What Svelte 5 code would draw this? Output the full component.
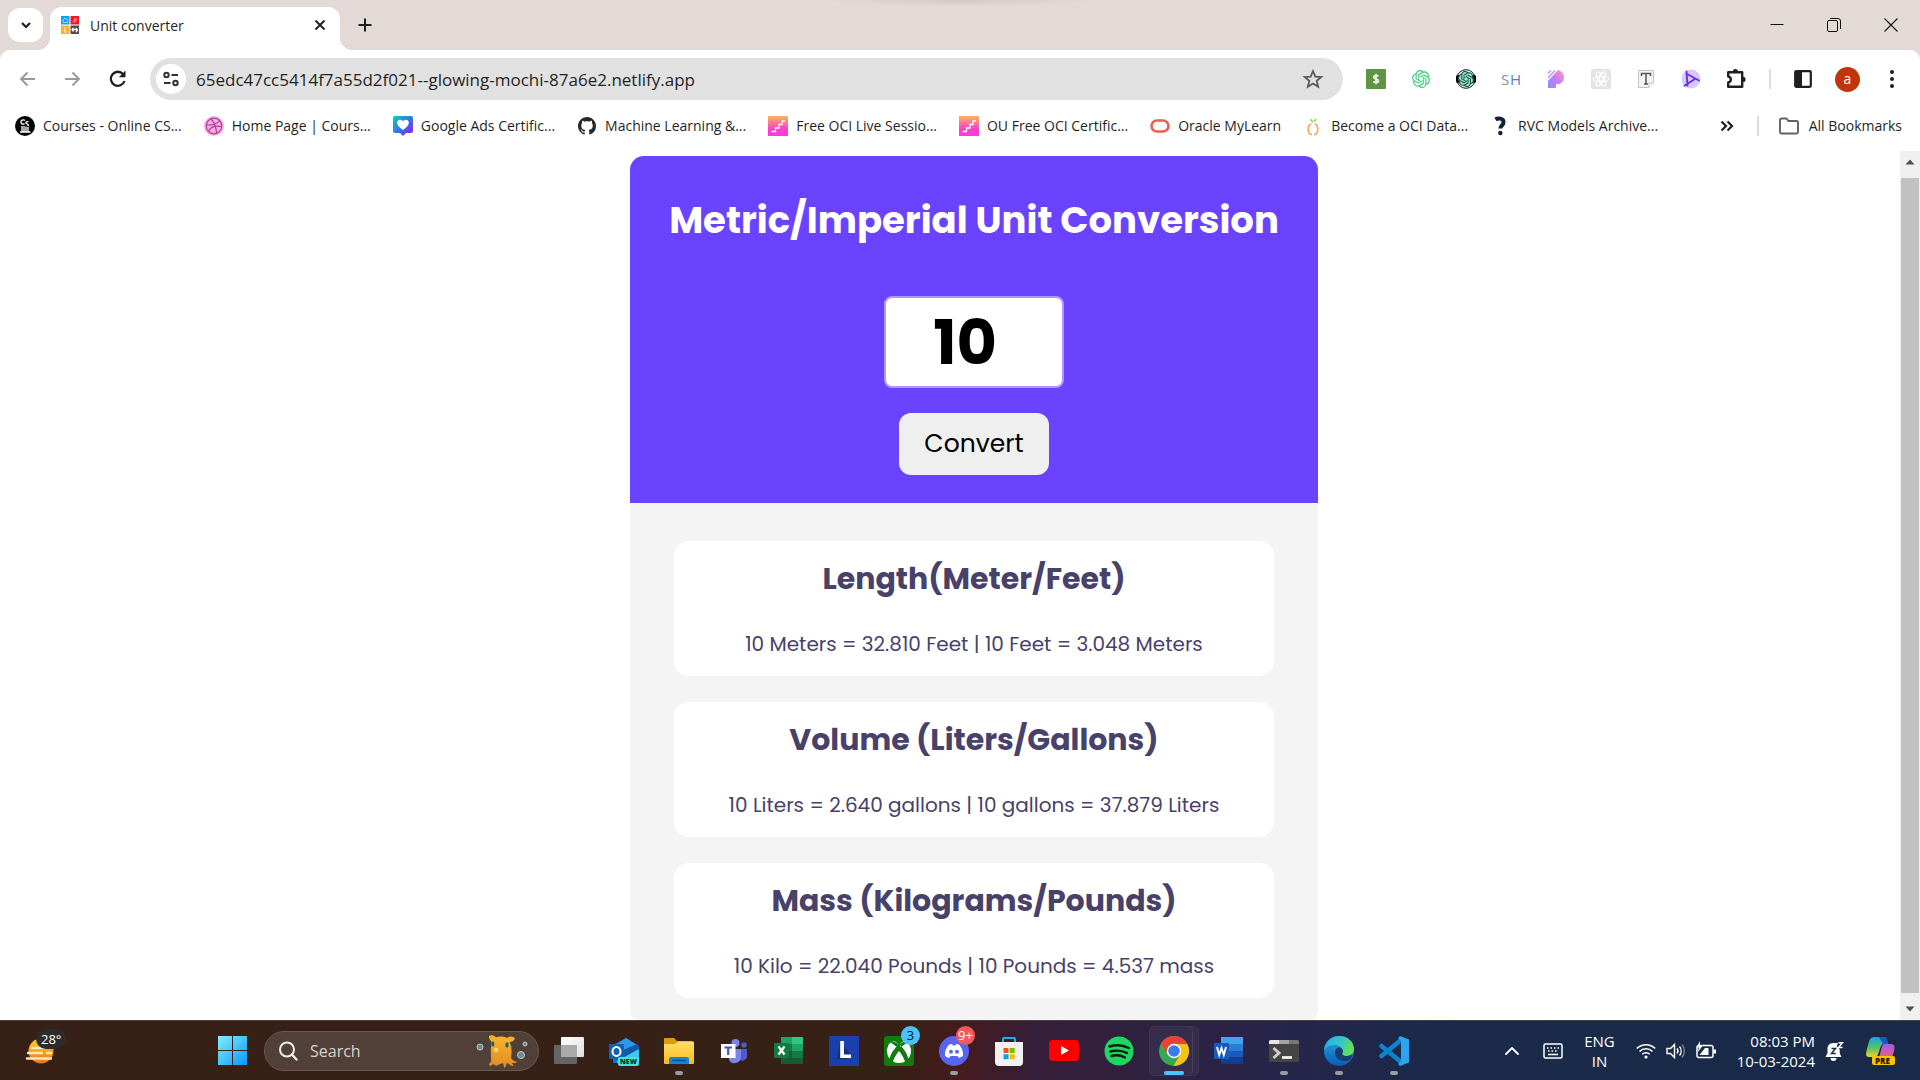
<script>
  let amount = $state(10);
  const address = '65edc47cc5414f7a55d2f021--glowing-mochi-87a6e2.netlify.app';

  const fixed = (n) => n.toFixed(3);
  const results = $derived([
    {
      title: 'Length(Meter/Feet)',
      text: `${amount} Meters = ${fixed(amount * 3.281)} Feet | ${amount} Feet = ${fixed(amount / 3.281)} Meters`
    },
    {
      title: 'Volume (Liters/Gallons)',
      text: `${amount} Liters = ${fixed(amount * 0.264)} gallons | ${amount} gallons = ${fixed(amount / 0.264)} Liters`
    },
    {
      title: 'Mass (Kilograms/Pounds)',
      text: `${amount} Kilo = ${fixed(amount * 2.204)} Pounds | ${amount} Pounds = ${fixed(amount / 2.204)} mass`
    }
  ]);

  const bookmarks = [
    { icon: 'cs', label: 'Courses - Online CS...' },
    { icon: 'ball', label: 'Home Page | Cours...' },
    { icon: 'heart', label: 'Google Ads Certific...' },
    { icon: 'github', label: 'Machine Learning &...' },
    { icon: 'stairs', label: 'Free OCI Live Sessio...' },
    { icon: 'stairs', label: 'OU Free OCI Certific...' },
    { icon: 'oracle', label: 'Oracle MyLearn' },
    { icon: 'fruit', label: 'Become a OCI Data...' },
    { icon: 'question', label: 'RVC Models Archive...' }
  ];

  const extensions = ['dollar', 'knot', 'knotphones', 'sh', 'pfeather', 'atom', 'type', 'play', 'puzzle'];

  const apps = [
    { name: 'Task view' },
    { name: 'Outlook' },
    { name: 'File Explorer', open: true },
    { name: 'Teams' },
    { name: 'Excel' },
    { name: 'Ledger' },
    { name: 'Xbox', badge: '3' },
    { name: 'Discord', open: true, badge: '9+', alert: true },
    { name: 'Microsoft Store' },
    { name: 'YouTube' },
    { name: 'Spotify' },
    { name: 'Chrome', open: true, active: true },
    { name: 'Word' },
    { name: 'Terminal', open: true },
    { name: 'Edge', open: true },
    { name: 'VS Code', open: true }
  ];
</script>

{#snippet knot(color)}
  <path fill={color} d="M22.2819 9.8211a5.9847 5.9847 0 0 0-.5157-4.9108 6.0462 6.0462 0 0 0-6.5098-2.9A6.0651 6.0651 0 0 0 4.9807 4.1818a5.9847 5.9847 0 0 0-3.9977 2.9 6.0462 6.0462 0 0 0 .7427 7.0966 5.98 5.98 0 0 0 .511 4.9107 6.051 6.051 0 0 0 6.5146 2.9001A5.9847 5.9847 0 0 0 13.2599 24a6.0557 6.0557 0 0 0 5.7718-4.2058 5.9894 5.9894 0 0 0 3.9977-2.9001 6.0557 6.0557 0 0 0-.7475-7.0729zm-9.022 12.6081a4.4755 4.4755 0 0 1-2.8764-1.0408l.1419-.0804 4.7783-2.7582a.7948.7948 0 0 0 .3927-.6813v-6.7369l2.02 1.1686a.071.071 0 0 1 .038.052v5.5826a4.504 4.504 0 0 1-4.4945 4.4944zm-9.6607-4.1254a4.4708 4.4708 0 0 1-.5346-3.0137l.142.0852 4.783 2.7582a.7712.7712 0 0 0 .7806 0l5.8428-3.3685v2.3324a.0804.0804 0 0 1-.0332.0615L9.74 19.9502a4.4992 4.4992 0 0 1-6.1408-1.6464zM2.3408 7.8956a4.485 4.485 0 0 1 2.3655-1.9728V11.6a.7664.7664 0 0 0 .3879.6765l5.8144 3.3543-2.0201 1.1685a.0757.0757 0 0 1-.071 0l-4.8303-2.7865A4.504 4.504 0 0 1 2.3408 7.872zm16.5963 3.8558L13.1038 8.364 15.1192 7.2a.0757.0757 0 0 1 .071 0l4.8303 2.7913a4.4944 4.4944 0 0 1-.6765 8.1042v-5.6772a.79.79 0 0 0-.407-.667zm2.0107-3.0231l-.142-.0852-4.7735-2.7818a.7759.7759 0 0 0-.7854 0L9.409 9.2297V6.8974a.0662.0662 0 0 1 .0284-.0615l4.8303-2.7866a4.4992 4.4992 0 0 1 6.6802 4.66zM8.3065 12.863l-2.02-1.1638a.0804.0804 0 0 1-.038-.0567V6.0742a4.4992 4.4992 0 0 1 7.3757-3.4537l-.142.0805L8.704 5.459a.7948.7948 0 0 0-.3927.6813zm1.0976-2.3654l2.602-1.4998 2.6069 1.4998v2.9994l-2.5974 1.4997-2.6067-1.4997Z" />
{/snippet}

{#snippet favicon(name)}
  <svg class="ico20" viewBox="0 0 20 20" aria-hidden="true">
    {#if name === 'cs'}
      <circle cx="10" cy="10" r="10" fill="#000" />
      <path d="M10 4.500C8 3 5.500 4.500 6 6.500S8.500 8.500 9.500 7.500M13.500 6C11.500 5 10 6.500 11.500 7.500S14.500 9 12.500 10M7 10V15.500M9 10V15.500M11 10.500V15.500M13 11V15.500M5 16H15.500" fill="none" stroke="#fff" stroke-width="1.300" />
    {:else if name === 'ball'}
      <circle cx="10" cy="10" r="10" fill="#fbaee3" />
      <g fill="none" stroke="#b0419a" stroke-width="1.200">
        <circle cx="10" cy="10" r="7.800" />
        <path d="M7.200 3C10 6 12 11 12.600 17.200M2.300 9.200C8 9.500 13 8 15.700 4.700M4.500 15.200C7 10.500 12 9.200 17.700 10.800" />
      </g>
    {:else if name === 'heart'}
      <defs><linearGradient id="heart" x1="0" y1="0" x2="1" y2="1"><stop offset="0" stop-color="#04cfc0" /><stop offset=".5" stop-color="#3277e8" /><stop offset="1" stop-color="#a10ff5" /></linearGradient></defs>
      <path d="M2 0H18a2 2 0 0 1 2 2V15a2 2 0 0 1-2 2H13L10 20 7 17H2a2 2 0 0 1-2-2V2a2 2 0 0 1 2-2Z" fill="url(#heart)" />
      <path d="M10 14C2 9 3.500 3.800 7 3.800 9 3.800 10 5.500 10 5.500S11 3.800 13 3.800C16.500 3.800 18 9 10 14Z" fill="#fff" />
    {:else if name === 'github'}
      <path transform="translate(1 1) scale(1.125)" fill="#24292f" d="M8 0C3.580 0 0 3.580 0 8c0 3.540 2.290 6.530 5.470 7.590.4.070.550-.170.550-.380 0-.190-.010-.820-.010-1.490-2.010.370-2.530-.490-2.690-.940-.090-.230-.480-.940-.820-1.130-.280-.150-.680-.520-.010-.530.630-.010 1.080.580 1.230.820.720 1.210 1.870.870 2.330.660.070-.520.280-.870.510-1.070-1.780-.200-3.640-.890-3.640-3.950 0-.870.310-1.590.820-2.150-.080-.200-.360-1.020.080-2.120 0 0 .670-.210 2.200.820.640-.180 1.320-.270 2-.270s1.360.090 2 .270c1.530-1.040 2.200-.820 2.200-.820.440 1.100.160 1.920.080 2.120.510.560.820 1.270.820 2.150 0 3.070-1.870 3.750-3.650 3.950.290.250.540.730.540 1.480 0 1.070-.010 1.930-.010 2.200 0 .210.150.460.550.380A8.010 8.010 0 0 0 16 8c0-4.420-3.580-8-8-8Z" />
    {:else if name === 'stairs'}
      <defs><linearGradient id="stairs" x1="0" y1="0" x2="0" y2="1"><stop offset="0" stop-color="#ffb65c" /><stop offset=".65" stop-color="#ff3fc8" /><stop offset="1" stop-color="#f93ae6" /></linearGradient></defs>
      <path d="M0 0H20V20H0Z" fill="url(#stairs)" />
      <path d="M3.500 15.500H7.500V12H11V8.500H14V5H17" fill="none" stroke="#fff" stroke-width="1.300" />
    {:else if name === 'oracle'}
      <rect x="1.500" y="4.500" width="17" height="11" rx="5.500" fill="none" stroke="#ec5f4b" stroke-width="2.600" />
    {:else if name === 'fruit'}
      <path d="M8.500 8C4 8 4 18.500 9 18.500M11.500 8C16 8 16 18.500 11 18.500" fill="none" stroke="#f7a763" stroke-width="1.700" />
      <path d="M10 7C7.500 6 7 4 7.500 2.500 9.500 3 10 5 10 7ZM10.500 6C10.500 4 12 2.500 13.500 2.500 13.500 5 12.500 6 10.500 6Z" fill="#9bd35f" />
    {:else if name === 'question'}
      <path d="M5.500 3.500C8 1.800 13.500 2 13.500 6 13.500 9.500 10.300 9.500 10.300 12.500" fill="none" stroke="#0b2239" stroke-width="4" />
      <circle cx="10.300" cy="17" r="2.200" fill="#0b2239" />
    {/if}
  </svg>
{/snippet}

{#snippet extension(name)}
  <svg class="ico20" viewBox="0 0 20 20" aria-hidden="true">
    {#if name === 'dollar'}
      <rect width="20" height="20" rx="1" fill="#5f9445" />
      <path d="M12.600 7.300C11.500 6 7.600 6 7.600 8.200 7.600 10.500 12.500 9.500 12.500 12 12.500 14 8.500 14 7.300 12.500M10 4.800V15.200" fill="none" stroke="#fff" stroke-width="1.500" />
    {:else if name === 'knot'}
      <g transform="translate(1 1) scale(.75)">{@render knot('#35cf74')}</g>
    {:else if name === 'knotphones'}
      <circle cx="10" cy="10" r="9.300" fill="#e9f5f1" stroke="#151515" />
      <rect y="6" width="4" height="8" rx="2" /><rect x="16" y="6" width="4" height="8" rx="2" />
      <circle cx="10" cy="10" r="7.500" fill="#a5d6c7" />
      <g transform="translate(2 2) scale(.67)">{@render knot('#0b5f4b')}</g>
    {:else if name === 'sh'}
      <text x="0" y="16" font-size="15" fill="#84919c">S</text><text x="9" y="16" font-size="15" fill="#4a87c5">H</text>
    {:else if name === 'pfeather'}
      <defs><linearGradient id="pf" x1="1" y1="0" x2="0" y2="1"><stop offset="0" stop-color="#ff9cc4" /><stop offset=".5" stop-color="#c87cf2" /><stop offset="1" stop-color="#8a8dff" /></linearGradient></defs>
      <path d="M2 12 12 1C20 2 21 16 10 15V19H2Z" fill="url(#pf)" />
      <path d="M2 4.500 5 1.500M2 9 9 1.500" stroke="#c59af5" stroke-width="1.700" />
    {:else if name === 'atom'}
      <rect width="20" height="20" rx="2" fill="#e3e3e3" />
      <g fill="none" stroke="#fff"><ellipse cx="10" cy="10" rx="8" ry="3" /><ellipse cx="10" cy="10" rx="8" ry="3" transform="rotate(60 10 10)" /><ellipse cx="10" cy="10" rx="8" ry="3" transform="rotate(120 10 10)" /><circle cx="10" cy="10" r="2" /></g>
    {:else if name === 'type'}
      <path d="M2.500 1.500H17.500V14L13 18.500H2.500Z" fill="#f4f4f4" stroke="#c4c4c4" />
      <path d="M13 18.500V14H17.500" fill="#fff" stroke="#c4c4c4" />
      <path d="M5.500 7V4.500H14.500V7M10 4.500V15M8 15H12" fill="none" stroke="#555" stroke-width="1.500" />
    {:else if name === 'play'}
      <circle cx="10" cy="10" r="9.500" fill="#d6c8fb" />
      <path d="M5.500 2.500 6.500 16.500M6 5 18 11.500M3.500 16.800 13.500 10.200" fill="none" stroke="#6a30e0" stroke-width="1.900" stroke-linecap="round" />
    {:else if name === 'puzzle'}
      <path d="M2.200 3.200H16.200V17.800H2.200V13.500C5.700 12.800 5.700 8.200 2.200 7.500Z" fill="none" stroke="#202124" stroke-width="2.400" stroke-linejoin="round" />
      <path d="M6.800 2.500A2.600 2.600 0 0 1 12 2.500ZM17 7.800A2.600 2.600 0 0 1 17 13Z" fill="#202124" />
    {/if}
  </svg>
{/snippet}

{#snippet appIcon(name)}
  <svg class="ico30" viewBox="0 0 30 30" aria-hidden="true">
    {#if name === 'Task view'}
      <defs><linearGradient id="tv" x1="0" y1="0" x2="1" y2="1"><stop offset="0" stop-color="#fff" /><stop offset="1" stop-color="#dedede" /></linearGradient></defs>
      <rect x="7" y="1" width="23" height="20" rx="1" fill="url(#tv)" />
      <rect y="9" width="23" height="19" rx="1" fill="#656565" />
      <path d="M7 9H23V21H7Z" fill="#aaa" />
    {:else if name === 'Outlook'}
      <path d="M4 9 17 2 30 10V27H4Z" fill="#1170c4" />
      <path d="M8 8 17 2 28 9 16 16Z" fill="#2f97e8" /><path d="M12 15 28 8 30 11V22L18 26Z" fill="#1257a8" />
      <path d="M8 25 30 13V27H8Z" fill="#42c5f5" />
      <rect y="8" width="15" height="15" rx="1" fill="#0f62b8" />
      <ellipse cx="7.500" cy="15.500" rx="4" ry="4.500" fill="none" stroke="#fff" stroke-width="2" />
      <rect x="9" y="21" width="21" height="9" rx="2" fill="#3ce6dc" />
      <text x="11" y="28" font-size="7" font-weight="800" fill="#082a2a">NEW</text>
    {:else if name === 'File Explorer'}
      <defs><linearGradient id="fe" x1="0" y1="0" x2="0" y2="1"><stop offset="0" stop-color="#ffdf6e" /><stop offset="1" stop-color="#fcbb14" /></linearGradient></defs>
      <path d="M0 3a1 1 0 0 1 1-1H10L13 5H28V10H0Z" fill="#dc9b0a" />
      <path d="M0 8H11L14 5.500H29a1 1 0 0 1 1 1V27a1 1 0 0 1-1 1H1a1 1 0 0 1-1-1Z" fill="url(#fe)" />
      <path d="M5 28V23a2 2 0 0 1 2-2H23a2 2 0 0 1 2 2V28Z" fill="#1484d8" /><path d="M9 24.500H21" stroke="#0a4f96" stroke-width="1.500" stroke-linecap="round" />
    {:else if name === 'Teams'}
      <circle cx="25" cy="9" r="2.800" fill="#5059c9" /><circle cx="16.500" cy="7" r="4" fill="#7b83eb" />
      <path d="M19 13H28V21a4.500 4.500 0 0 1-8 2Z" fill="#5059c9" />
      <path d="M10 13H22V20a6.500 6.500 0 0 1-12 4Z" fill="#7b83eb" />
      <rect x="2" y="8" width="14.500" height="14" fill="#fff" /><path d="M5.500 11.500H13M9.200 11.500V19" stroke="#4b53bc" stroke-width="2.200" />
    {:else if name === 'Excel'}
      <path d="M7 1H29V28H7Z" fill="#21a366" /><path d="M18 1H29V8H18Z" fill="#33c481" /><path d="M7 8H18V15H7Z" fill="#107c41" /><path d="M7 15H29V28H7Z" fill="#185c37" /><path d="M18 15H29V22H18Z" fill="#107c41" />
      <rect y="7" width="15" height="15" rx="1" fill="#107c41" /><path d="M4.500 10.500 10.500 18.500M10.500 10.500 4.500 18.500" stroke="#fff" stroke-width="2.200" />
    {:else if name === 'Ledger'}
      <path d="M0 0H30V30H0Z" fill="#1c3fae" /><path d="M11 6 8 23H18L22 19Z" fill="#11307c" /><path d="M11.200 5H15V18.500H22V22H11.200Z" fill="#fff" />
    {:else if name === 'Xbox'}
      <rect width="30" height="30" rx="3" fill="#107c10" /><circle cx="15" cy="15" r="12" fill="#fff" />
      <path d="M6 4C9 4 12 6 15 8.500 18 6 21 4 24 4L15 0ZM15 8.500C10 12 6 19 5 25L8 28C10 22 13 17 15 15 17 17 20 22 22 28L25 25C24 19 20 12 15 8.500ZM15 8.500 9 5 6 6 13 11ZM15 8.500 21 5 24 6 17 11Z" fill="#107c10" />
    {:else if name === 'Discord'}
      <circle cx="15" cy="15" r="15" fill="#5865f2" />
      <path d="M10 8.500 13 8 13.800 9.500H16.200L17 8 20 8.500C23 12 24.500 16 24 20L20 22 18.500 20H11.500L10 22 6 20C5.500 16 7 12 10 8.500Z" fill="#fff" /><circle cx="12" cy="15.800" r="2" fill="#5865f2" /><circle cx="18" cy="15.800" r="2" fill="#5865f2" />
    {:else if name === 'Microsoft Store'}
      <path d="M9 7V3a1 1 0 0 1 1-1H20a1 1 0 0 1 1 1V7" fill="none" stroke="#2aa9e8" stroke-width="2" />
      <path d="M1 6H29V26a4 4 0 0 1-4 4H5a4 4 0 0 1-4-4Z" fill="#f1f1f1" />
      <path d="M9.500 12H14.500V17H9.500Z" fill="#f25022" /><path d="M15.700 12H20.700V17H15.700Z" fill="#7fba00" /><path d="M9.500 18.200H14.500V23.200H9.500Z" fill="#00a4ef" /><path d="M15.700 18.200H20.700V23.200H15.700Z" fill="#ffb900" />
    {:else if name === 'YouTube'}
      <rect y="4" width="30" height="21" rx="4" fill="#f00" /><path d="M12 10V19L20 14.500Z" fill="#fff" />
    {:else if name === 'Spotify'}
      <circle cx="15" cy="15" r="14.500" fill="#1ed760" />
      <path d="M5.500 10.500C12 8.500 19 9 25 12M6.500 15.500C12 14 18 14.500 23 17M7.500 20C12 18.800 17 19.300 21 21.500" fill="none" stroke="#0a1a10" stroke-width="2.400" stroke-linecap="round" />
    {:else if name === 'Chrome'}
      <circle cx="15" cy="15" r="15" fill="#34a853" />
      <path d="M15 8H28.300A15 15 0 0 0 2 7.500L8.900 18.500Z" fill="#ea4335" />
      <path d="M15 8H28.300A15 15 0 0 1 14.500 30L21 18.500Z" fill="#fbc116" />
      <circle cx="15" cy="15" r="7.200" fill="#fff" /><circle cx="15" cy="15" r="5.800" fill="#3a7bf0" />
    {:else if name === 'Word'}
      <path d="M7 1H29V8H7Z" fill="#41a5ee" /><path d="M7 8H29V15H7Z" fill="#2b7cd3" /><path d="M7 15H29V21.500H7Z" fill="#185abd" /><path d="M7 21.500H29V28H7Z" fill="#103f91" />
      <rect y="7" width="15" height="16" rx="1" fill="#185abd" /><path d="M3 11 5.200 19 7.500 12 9.800 19 12 11" fill="none" stroke="#fff" stroke-width="1.900" />
    {:else if name === 'Terminal'}
      <rect y="4" width="30" height="22" rx="1.500" fill="#454545" /><path d="M0 8V5.500A1.500 1.500 0 0 1 1.500 4H10V8Z" fill="#e5e5e5" /><path d="M10 4H20V8H10Z" fill="#a5a5a5" /><path d="M20 4H28.500A1.500 1.500 0 0 1 30 5.500V8H20Z" fill="#777" />
      <path d="M4.500 12 10 17 4.500 22" fill="none" stroke="#ccc" stroke-width="3" /><path d="M13 21.500H23" stroke="#fff" stroke-width="2.600" />
    {:else if name === 'Edge'}
      <defs>
        <linearGradient id="edgeTop" x1="0" y1="0" x2="1" y2=".4"><stop offset="0" stop-color="#2aa7e6" /><stop offset=".6" stop-color="#33c9c8" /><stop offset="1" stop-color="#62df55" /></linearGradient>
        <linearGradient id="edgeLow" x1="0" y1="0" x2="0" y2="1"><stop offset="0" stop-color="#28a5e8" /><stop offset="1" stop-color="#0a5cb5" /></linearGradient>
      </defs>
      <circle cx="15" cy="15" r="15" fill="url(#edgeLow)" />
      <path d="M0 14C1 5 8 0 15 0 24 0 30 6 30 13 30 18 26 20 22.500 20 19 20 17.500 18.500 18.500 17 20 14 17 9 10.500 9 5 9 1.500 12 0 14Z" fill="url(#edgeTop)" />
      <path d="M11 17C11 12 14 11 16 11.500 19 12.500 19.500 15 18.500 17 17.500 18.500 19 20 22.500 20 25 20 27 19 28.500 18 28 21 27 22.500 26 24 18 27 11 23 11 17Z" fill="#17406f" />
    {:else if name === 'VS Code'}
      <path d="M2.500 10 22 26M2.500 20 22 4" stroke="#0b85d0" stroke-width="4.600" stroke-linecap="round" />
      <path d="M21 0 30 3.500V26.500L21 30 19 28 22 25V5L19 2Z" fill="#2ba5f2" />
    {/if}
  </svg>
{/snippet}

<div class="desktop">
  <header class="browser">
    <div class="tabstrip">
      <button class="tabsearch" aria-label="Search tabs">
        <svg class="ico20" viewBox="0 0 20 20"><path d="M6 8 10 12 14 8" fill="none" stroke="#1f1f1f" stroke-width="2.200" /></svg>
      </button>
      <div class="tab">
        <svg class="ico20" viewBox="0 0 20 20" aria-hidden="true">
          <path d="M1 1H9.500V9.500H1Z" fill="#0aa4f4" /><path d="M10.500 1H19V9.500H10.500Z" fill="#ec1c24" /><path d="M1 10.500H9.500V19H1Z" fill="#fbb034" /><path d="M10.500 10.500H19V19H10.500Z" fill="#4d4d4f" />
          <path d="M3 7.500V5L5 3 7.500 5V7.500ZM13 7 15.500 3M14.500 7.500 17 3.500" fill="none" stroke="#fff" stroke-opacity=".6" /><path d="M5 12.500V17.500M4 17H6.500" stroke="#fff" stroke-opacity=".6" stroke-width="1.500" /><path d="M12 14.500H17.500M13.500 13 12 14.500 13.500 16.500M16 13 17.500 15 16 17" stroke="#fff" stroke-width="1.300" fill="none" />
        </svg>
        <span class="tabtitle">Unit converter</span>
        <button class="plain" aria-label="Close tab"><svg class="ico20" viewBox="0 0 20 20"><path d="M5.500 5.500 14.500 14.500M14.500 5.500 5.500 14.500" stroke="#1f1f1f" stroke-width="1.900" /></svg></button>
      </div>
      <button class="plain newtab" aria-label="New tab"><svg class="ico20" viewBox="0 0 20 20"><path d="M10 3.500V16.500M3.500 10H16.500" stroke="#1f1f1f" stroke-width="2" /></svg></button>
      <div class="windowctl">
        <button class="plain" aria-label="Minimize"><svg class="ico20" viewBox="0 0 20 20"><path d="M3.500 9.500H16.500" stroke="#111" /></svg></button>
        <button class="plain" aria-label="Restore"><svg class="ico20" viewBox="0 0 20 20"><path d="M6 3.500H14A2.500 2.500 0 0 1 16.500 6V14" fill="none" stroke="#111" /><rect x="3.500" y="5.500" width="10" height="11" rx="1.500" fill="none" stroke="#111" /></svg></button>
        <button class="plain" aria-label="Close"><svg class="ico20" viewBox="0 0 20 20"><path d="M3.500 3.500 16.500 16.500M16.500 3.500 3.500 16.500" stroke="#111" stroke-width="1.100" /></svg></button>
      </div>
    </div>

    <div class="panel">
      <div class="toolbar">
        <nav class="history" aria-label="History">
          <button class="plain" aria-label="Back"><svg class="ico20" viewBox="0 0 20 20"><path d="M17 10H3M9.500 3.500 3 10 9.500 16.500" fill="none" stroke="#9a9a9a" stroke-width="1.900" /></svg></button>
          <button class="plain" aria-label="Forward"><svg class="ico20" viewBox="0 0 20 20"><path d="M2 10H16M9.500 3.500 16 10 9.500 16.500" fill="none" stroke="#9a9a9a" stroke-width="1.900" /></svg></button>
          <button class="plain" aria-label="Reload"><svg class="ico20" viewBox="0 0 20 20"><path d="M16.500 12A7 7 0 1 1 15 5" fill="none" stroke="#1f1f1f" stroke-width="2.300" /><path d="M17.500 1.500V8.300H10.800Z" fill="#1f1f1f" /></svg></button>
        </nav>
        <div class="omnibox">
          <button class="siteinfo" aria-label="Site information">
            <svg class="ico20" viewBox="0 0 20 20"><g fill="none" stroke="#303134" stroke-width="2"><circle cx="5.500" cy="6" r="2.200" /><path d="M10.500 6H17M3 14H9.500" /><circle cx="14.500" cy="14" r="2.200" /></g></svg>
          </button>
          <input aria-label="Address" value={address} />
          <button class="plain" aria-label="Bookmark this tab"><svg class="ico20" viewBox="0 0 20 20"><path d="M10 2 12.300 7.600 18.300 8 13.700 11.900 15.200 17.800 10 14.600 4.800 17.800 6.300 11.900 1.700 8 7.700 7.600Z" fill="none" stroke="#5a5a5a" stroke-width="1.800" /></svg></button>
        </div>
        <div class="extensions">
          {#each extensions as name}
            <button class="plain" aria-label={name}>{@render extension(name)}</button>
          {/each}
        </div>
        <span class="divider"></span>
        <div class="profile">
          <button class="plain" aria-label="Side panel"><svg class="ico20" viewBox="0 0 20 20"><rect x="2.200" y="2.200" width="15.600" height="15.600" rx="1" fill="none" stroke="#1f1f1f" stroke-width="2.200" /><path d="M2 2H9V18H2Z" fill="#1f1f1f" /></svg></button>
          <button class="avatar">a</button>
          <button class="plain" aria-label="Menu"><svg class="ico20" viewBox="0 0 20 20" fill="#1f1f1f"><circle cx="10" cy="3" r="2" /><circle cx="10" cy="10" r="2" /><circle cx="10" cy="17" r="2" /></svg></button>
        </div>
      </div>

      <nav class="bookmarks" aria-label="Bookmarks">
        <div class="marks">
          {#each bookmarks as mark}
            <a href="#top">{@render favicon(mark.icon)}<span>{mark.label}</span></a>
          {/each}
        </div>
        <button class="plain" aria-label="More bookmarks"><svg class="ico20" viewBox="0 0 20 20"><path d="M4.500 5.500 9 10 4.500 14.500M10.500 5.500 15 10 10.500 14.500" fill="none" stroke="#1f1f1f" stroke-width="2.200" /></svg></button>
        <span class="divider"></span>
        <a class="all" href="#all"><svg class="ico20" viewBox="0 0 20 20" aria-hidden="true"><path d="M1 4A1.500 1.500 0 0 1 2.500 2.500H7.500L9.500 5H17.500A1.500 1.500 0 0 1 19 6.500V16A1.500 1.500 0 0 1 17.500 17.500H2.500A1.500 1.500 0 0 1 1 16Z" fill="none" stroke="#5f6368" stroke-width="1.900" /></svg><span>All Bookmarks</span></a>
      </nav>
    </div>
  </header>

  <div class="viewport">
    <main class="page">
      <div class="converter">
        <form class="entry" onsubmit={(e) => e.preventDefault()}>
          <h1>Metric/Imperial Unit Conversion</h1>
          <input type="number" aria-label="Amount" bind:value={amount} />
          <button>Convert</button>
        </form>
        <div class="results">
          {#each results as result}
            <section>
              <h2>{result.title}</h2>
              <p>{result.text}</p>
            </section>
          {/each}
        </div>
      </div>
    </main>
    <div class="scrollbar" aria-hidden="true">
      <svg viewBox="0 0 20 20"><path d="M5.500 13.500H14.500L10 8.500Z" fill="#505050" /></svg>
      <span></span>
      <svg viewBox="0 0 20 20"><path d="M5.500 6.500H14.500L10 11.500Z" fill="#505050" /></svg>
    </div>
  </div>

  <footer class="taskbar">
    <button class="plain weather" aria-label="Weather">
      <svg class="ico30" viewBox="0 0 30 30" aria-hidden="true">
        <defs><linearGradient id="sun" x1="0" y1="0" x2="0" y2="1"><stop offset="0" stop-color="#ffd02b" /><stop offset="1" stop-color="#f0741a" /></linearGradient></defs>
        <circle cx="15" cy="15" r="12.500" fill="url(#sun)" /><path d="M6 12H18M2 17H16M21 17H25M1 22.500H25" stroke="#fde6bc" stroke-width="2.400" stroke-linecap="round" />
      </svg>
      <span class="temp">28°</span>
    </button>
    <button class="plain" aria-label="Start">
      <svg class="ico30" viewBox="0 0 30 30">
        <defs><linearGradient id="win" gradientUnits="userSpaceOnUse" x1="0" y1="0" x2="30" y2="30"><stop offset="0" stop-color="#7ff0ff" /><stop offset="1" stop-color="#0a93fb" /></linearGradient></defs>
        <path d="M0 0H14V14H0ZM15 0H29V14H15ZM0 15H14V29H0ZM15 15H29V29H15Z" fill="url(#win)" />
      </svg>
    </button>
    <label class="search">
      <svg class="ico20" viewBox="0 0 20 20" aria-hidden="true"><circle cx="9" cy="8.500" r="7" fill="none" stroke="#eee" stroke-width="2" /><path d="M14 13.500 18.500 18.500" stroke="#eee" stroke-width="2.400" stroke-linecap="round" /></svg>
      <input placeholder="Search" aria-label="Search" />
      <svg class="creature" viewBox="0 0 52 34" aria-hidden="true">
        <defs><linearGradient id="axo" x1="0" y1="0" x2="0" y2="1"><stop offset="0" stop-color="#f9b62c" /><stop offset="1" stop-color="#e08a24" /></linearGradient></defs>
        <path d="M13 2C15 .5 18 1 20 3.500 23 2 28 2 31 4 33 2 36 2 39 4 38 7 36 8 33.500 8 36 13 36 19 35 24 36 26 38 27 41 28 39 29.500 37 29 36 29 37 31 38 31.500 37 32 34.500 31.500 33 29.500 31 29 30 31 30 33 28.500 34 27 32.500 28 31 27 29 24 30 22 31 20 32 18.500 30.500 17 29 15 32 12 31 13 29.500 15 28 15.500 26 14.500 20 15 13 17 7 14 6.500 13 4 13 2Z" fill="url(#axo)" />
        <ellipse cx="17" cy="10" rx="1.300" ry="2.800" fill="#17626b" /><ellipse cx="31" cy="11" rx="1.600" ry="2.800" fill="#17626b" /><circle cx="20" cy="16" r="2.300" fill="#ffd964" />
        <g fill="#6f8a92" stroke="#b9c9cf"><circle cx="4" cy="13" r="3" /><circle cx="49" cy="10" r="2" /><circle cx="45" cy="21" r="3.500" /></g>
      </svg>
    </label>

    <div class="apps">
      {#each apps as app}
        <button class={['app', app.open && 'open', app.active && 'active']} aria-label={app.name}>
          {@render appIcon(app.name)}
          {#if app.badge}<span class={['badge', app.alert && 'alert']}>{app.badge}</span>{/if}
        </button>
      {/each}
    </div>

    <div class="tray">
      <button class="plain" aria-label="Hidden icons"><svg class="ico20" viewBox="0 0 20 20"><path d="M4 13 10 7 16 13" fill="none" stroke="#fff" stroke-width="1.900" stroke-linecap="round" /></svg></button>
      <button class="plain" aria-label="Touch keyboard"><svg class="ico20" viewBox="0 0 20 20" fill="none" stroke="#fff" stroke-width="1.500"><rect x="1" y="3" width="18" height="14" rx="1.500" /><path d="M4 7H16M5 10H15" stroke-dasharray="1.500 2" /><path d="M5 13.500H15" /></svg></button>
      <button class="plain lang">ENG<br />IN</button>
      <button class="plain status" aria-label="Network, volume and battery">
        <svg class="ico20" viewBox="0 0 20 20" fill="none" stroke="#fff" stroke-width="1.600"><path d="M.8 7.500A13 13 0 0 1 19.200 7.500M3.500 10.500A9.200 9.200 0 0 1 16.500 10.500M6.300 13.300A5.300 5.300 0 0 1 13.700 13.300" /><circle cx="10" cy="16" r="1.600" fill="#fff" stroke="none" /></svg>
        <svg class="ico20" viewBox="0 0 20 20" fill="none" stroke="#fff" stroke-width="1.400"><path d="M1 7.500H4.500L8.500 3.500V16.500L4.500 12.500H1Z" /><path d="M11 7.500A4 4 0 0 1 11 12.500M13.500 5.500A7 7 0 0 1 13.500 14.500" /><path d="M16 3.500A10 10 0 0 1 16 16.500" stroke="#73809a" /></svg>
        <svg class="ico20" viewBox="0 0 20 20"><rect x="1" y="4.500" width="16" height="12" rx="2" fill="none" stroke="#fff" stroke-width="1.500" /><path d="M9 7H12.500V14H3.500ZM17.500 8.500H20V12.500H17.500Z" fill="#fff" /><path d="M4 0 .5 6.500H3L1.500 11.500 6.500 5H4Z" fill="#fff" /></svg>
      </button>
      <button class="plain clock">08:03 PM<br />10-03-2024</button>
      <button class="plain" aria-label="Notifications"><svg class="ico20" viewBox="0 0 20 20"><path d="M9.500 2C5 2 3.500 5 3.500 8V12L1.500 16H17.500L15.500 12V8ZM6.500 17A3 3 0 0 0 12.500 17Z" fill="#fff" /><path d="M9 2H14L12 7 15.500 9V13H4Z" fill="#fff" /><path d="M7.500 7.500H11.500L7.500 12.500H11.700" fill="none" stroke="#1a2b49" stroke-width="1.500" /><path d="M14.500 1.800H18.500L14.500 6.500H18.500" fill="none" stroke="#fff" stroke-width="1.400" /></svg></button>
      <button class="plain" aria-label="Copilot"><svg class="ico30" viewBox="0 0 30 30">
        <defs>
          <linearGradient id="cpA" x1="0" y1="0" x2="0" y2="1"><stop offset="0" stop-color="#1aa0ef" /><stop offset=".5" stop-color="#4fc06a" /><stop offset="1" stop-color="#f1d02c" /></linearGradient>
          <linearGradient id="cpB" x1="0" y1="0" x2="0" y2="1"><stop offset="0" stop-color="#a659ef" /><stop offset="1" stop-color="#f7665b" /></linearGradient>
        </defs>
        <path d="M9 1H19C22 1 22 5 23 8H18C15 8 14 20 11 21H4C0 21 1 17 2 13 4 6 4 1 9 1Z" fill="url(#cpA)" /><path d="M14 1H19C22 1 22 5 23 8H18Z" fill="#1558c8" />
        <path d="M19 8H26C30 8 30 12 29 15L26 25H12C15 24 16 8 19 8Z" fill="url(#cpB)" />
        <rect x="7" y="20" width="23" height="9" rx="2" fill="#fbc300" /><text x="10" y="28" font-size="8" font-weight="800" fill="#1d1a00">PRE</text>
      </svg></button>
    </div>
  </footer>
</div>

<style>
  :global(body) { margin: 0; overflow: hidden; }
  .desktop { --ui: "Open Sans", "Noto Sans", sans-serif; display: flex; flex-direction: column; height: 100vh; font-family: var(--ui); font-size: 14px; color: #1f1f1f; background: #fff; }
  button, input { font: inherit; color: inherit; }
  svg { display: block; flex: none; overflow: visible; }
  .ico20 { width: 20px; height: 20px; }
  .ico30 { width: 30px; height: 30px; }
  .plain { display: flex; align-items: center; border: 0; padding: 0; background: none; }
  a { display: flex; align-items: center; gap: 8px; color: inherit; text-decoration: none; white-space: nowrap; }

  .browser { background: #e3dad7; }
  .tabstrip { display: flex; align-items: center; height: 50px; padding: 0 19px 0 8px; background: radial-gradient(ellipse 140px 6px at 960px 0, #d2c9c7, #e3dad7); }
  .tabsearch { display: grid; place-items: center; width: 35px; height: 34px; border: 0; border-radius: 12px; padding: 0; background: #fff; }
  .tab { position: relative; display: flex; align-items: center; align-self: flex-end; gap: 10px; width: 290px; height: 43px; box-sizing: border-box; margin-left: 7px; padding: 0 10px 7px; border-radius: 12px 12px 0 0; background: #fff; }
  .tab::before, .tab::after { content: ""; position: absolute; bottom: 0; width: 12px; height: 12px; }
  .tab::before { left: -12px; background: radial-gradient(circle at 0 0, transparent 12px, #fff 12px); }
  .tab::after { right: -12px; background: radial-gradient(circle at 100% 0, transparent 12px, #fff 12px); }
  .tabtitle { flex: 1; }
  .newtab { margin-left: 15px; }
  .windowctl { display: flex; gap: 37px; margin-left: auto; }

  .panel { border-radius: 10px 10px 0 0; background: #fff; }
  .toolbar { display: flex; align-items: center; height: 58px; padding: 0 18px; }
  .history { display: flex; gap: 25px; margin-right: 22px; }
  .omnibox { display: flex; align-items: center; flex: 1; gap: 10px; height: 42px; box-sizing: border-box; padding: 0 20px 0 6px; border-radius: 21px; background: #e1e1e1; }
  .siteinfo { display: grid; place-items: center; width: 30px; height: 30px; border: 0; border-radius: 50%; padding: 0; background: #fff; }
  .omnibox input { flex: 1; min-width: 0; border: 0; padding: 0; background: none; font-size: 17px; }
  .extensions { display: flex; gap: 25px; margin: 0 23px; }
  .divider { width: 2px; height: 20px; background: #e3dad7; }
  .profile { display: flex; align-items: center; gap: 22px; margin-left: 22px; }
  .avatar { width: 25px; height: 25px; border: 0; border-radius: 50%; padding: 0; background: #bf360c; color: #fff; line-height: 20px; }
  .bookmarks { display: flex; align-items: center; gap: 20px; height: 35px; padding: 0 18px 8px 15px; }
  .marks { display: flex; flex: 1; gap: 22px; }
  .all { gap: 10px; }

  .viewport { display: flex; flex: 1; min-height: 0; }
  .page { flex: 1; min-width: 0; overflow: hidden; padding: 5px 0 0 48px; font-family: Poppins, Inter, sans-serif; }
  .converter { width: 688px; max-width: 100%; margin: 0 auto; border-radius: 14px; background: #f4f4f4; overflow: hidden; }
  .entry { display: flex; flex-direction: column; align-items: center; padding: 36px 40px 28px; background: #6943ff; }
  h1, h2, p { margin: 0; text-align: center; }
  h1 { color: #fff; font-size: 37px; line-height: 56px; white-space: nowrap; }
  .entry input { width: 180px; height: 92px; box-sizing: border-box; margin: 48px 0 25px; border: 2px solid #b295ff; border-radius: 8px; padding: 0 18px 0 0; background: #fff; color: #000; font-size: 62px; font-weight: 700; text-align: center; appearance: textfield; }
  .entry input::-webkit-inner-spin-button { display: none; }
  .entry button { height: 62px; border: 0; border-radius: 12px; padding: 0 25px; background: #efefef; color: #000; font-size: 25px; }
  .results { display: flex; flex-direction: column; gap: 26px; padding: 38px 44px 26px; color: #48416a; }
  section { display: flex; flex-direction: column; gap: 26px; border-radius: 15px; padding: 15px 20px 16px; background: #fff; }
  h2 { font-size: 30px; line-height: 46px; }
  p { font-size: 20px; line-height: 32px; }
  .scrollbar { display: flex; flex-direction: column; gap: 7px; width: 20px; background: #f0f0f0; }
  .scrollbar svg { width: 20px; height: 20px; }
  .scrollbar span { flex: 1; margin: 0 1px; background: #c1c1c1; }

  .taskbar { display: flex; align-items: center; height: 60px; box-sizing: border-box; border-top: 1px solid #46413c; padding: 0 25px 0 26px; background: linear-gradient(90deg, #372016 0 47%, #451b1d 50%, #351e39 54%, #26254a 67%, #1b2a4a 75%, #182a47 100%); color: #fff; }
  .weather { position: relative; width: 192px; }
  .temp { position: absolute; left: 10px; top: -7px; padding: 0 5px; border-radius: 10px; background: #2c2c2c; font-size: 13px; line-height: 20px; }
  .search { display: flex; align-items: center; gap: 12px; width: 275px; height: 40px; box-sizing: border-box; margin: 0 17px 0 16px; border: 1px solid #6b574e; border-radius: 20px; padding: 0 10px 0 13px; background: #514037; }
  .search input { flex: 1; min-width: 0; border: 0; padding: 0; background: none; font-size: 16px; }
  .search input::placeholder { color: #d8d2cf; opacity: 1; }
  .creature { width: 52px; height: 34px; }
  .apps { display: flex; gap: 5px; margin-right: auto; margin-left: -12px; }
  .app { position: relative; display: grid; place-items: center; width: 50px; height: 50px; border: 1px solid transparent; border-radius: 5px; padding: 0; background: none; }
  .open::after { content: ""; position: absolute; bottom: 0; width: 8px; height: 4px; border-radius: 2px; background: #9c9aa5; }
  .active { border-color: #3e3454; background: #362d4c; }
  .active::before { content: ""; position: absolute; inset: 0 5px 0 0; border-right: 1px solid #4a4160; border-radius: 5px; }
  .active::after { width: 20px; background: #4cc2ff; }
  .badge { position: absolute; right: 3px; top: -1px; width: 19px; border-radius: 10px; background: #4cc2ff; color: #111; font-size: 13px; line-height: 19px; }
  .alert { background: #f25a5a; color: #fff; }
  .tray { display: flex; align-items: center; gap: 21px; }
  .lang, .clock { display: block; line-height: 20px; font-size: 15px; }
  .clock { margin-right: -12px; text-align: right; }
  .status { gap: 10px; }
</style>
